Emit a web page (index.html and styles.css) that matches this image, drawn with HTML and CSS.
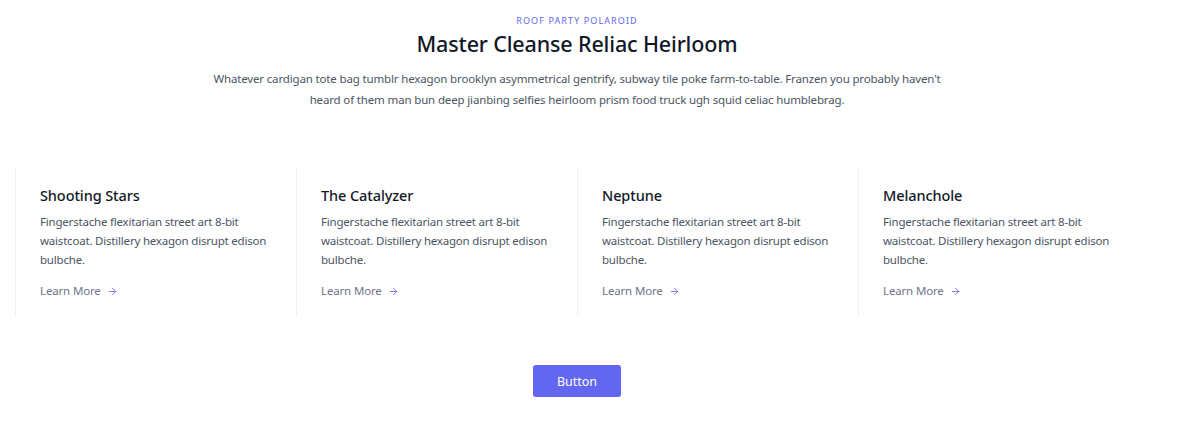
FILE: index.html
```html
<!DOCTYPE html>
<html>
<head>
<meta charset="utf-8">
<link rel="stylesheet" href="styles.css">
</head>
<body>
<section class="section">
  <div class="container">
    <header class="intro">
      <h2 class="eyebrow">ROOF PARTY POLAROID</h2>
      <h1 class="title">Master Cleanse Reliac Heirloom</h1>
      <p class="lead">Whatever cardigan tote bag tumblr hexagon brooklyn asymmetrical gentrify, subway tile poke farm-to-table. Franzen you probably haven't heard of them man bun deep jianbing selfies heirloom prism food truck ugh squid celiac humblebrag.</p>
    </header>
    <div class="cards">
      <div class="card">
        <h3 class="card-title">Shooting Stars</h3>
        <p class="card-text">Fingerstache flexitarian street art 8-bit waistcoat. Distillery hexagon disrupt edison bulbche.</p>
        <a class="more" href="#">Learn More<svg class="arrow" viewBox="0 0 24 24" fill="none" stroke="currentColor" stroke-width="1.8" stroke-linecap="round" stroke-linejoin="round"><path d="M5 12h14M12 5l7 7-7 7"/></svg></a>
      </div>
      <div class="card">
        <h3 class="card-title">The Catalyzer</h3>
        <p class="card-text">Fingerstache flexitarian street art 8-bit waistcoat. Distillery hexagon disrupt edison bulbche.</p>
        <a class="more" href="#">Learn More<svg class="arrow" viewBox="0 0 24 24" fill="none" stroke="currentColor" stroke-width="1.8" stroke-linecap="round" stroke-linejoin="round"><path d="M5 12h14M12 5l7 7-7 7"/></svg></a>
      </div>
      <div class="card">
        <h3 class="card-title">Neptune</h3>
        <p class="card-text">Fingerstache flexitarian street art 8-bit waistcoat. Distillery hexagon disrupt edison bulbche.</p>
        <a class="more" href="#">Learn More<svg class="arrow" viewBox="0 0 24 24" fill="none" stroke="currentColor" stroke-width="1.8" stroke-linecap="round" stroke-linejoin="round"><path d="M5 12h14M12 5l7 7-7 7"/></svg></a>
      </div>
      <div class="card">
        <h3 class="card-title">Melanchole</h3>
        <p class="card-text">Fingerstache flexitarian street art 8-bit waistcoat. Distillery hexagon disrupt edison bulbche.</p>
        <a class="more" href="#">Learn More<svg class="arrow" viewBox="0 0 24 24" fill="none" stroke="currentColor" stroke-width="1.8" stroke-linecap="round" stroke-linejoin="round"><path d="M5 12h14M12 5l7 7-7 7"/></svg></a>
      </div>
    </div>
    <div class="actions">
      <button class="btn">Button</button>
    </div>
  </div>
</section>
</body>
</html>
```
FILE: styles.css
```css
* { box-sizing: border-box; }
html, body { margin: 0; padding: 0; background: #fff; }
body {
  font-family: "Noto Sans", "Open Sans", sans-serif;
  color: #4b5563;
}
.section { padding-top: 13px; }
.container {
  width: 1124px;
  margin-left: 15px;
}
.intro {
  display: flex;
  flex-direction: column;
  align-items: center;
  text-align: center;
}
.eyebrow {
  margin: 0;
  font-size: 9px;
  line-height: 16px;
  font-weight: 400;
  letter-spacing: 1.1px;
  color: #6366f1;
}
.title {
  margin: 1px 0 0;
  font-size: 21.5px;
  line-height: 28px;
  font-weight: 500;
  letter-spacing: -0.15px;
  color: #111827;
}
.lead {
  margin: 10px 0 0;
  width: 748px;
  font-size: 11.5px;
  line-height: 21px;
  letter-spacing: -0.15px;
  color: #4b5563;
}
.cards {
  display: flex;
  margin-top: 58px;
}
.card {
  width: 281px;
  border-left: 1.5px solid #eef0f2;
  padding: 17px 24px 16px;
}
.card-title {
  margin: 0;
  font-size: 14.5px;
  line-height: 21px;
  font-weight: 500;
  letter-spacing: -0.1px;
  color: #111827;
}
.card-text {
  margin: 6px 0 9px;
  font-size: 11.5px;
  line-height: 19px;
  letter-spacing: -0.2px;
  color: #4b5563;
}
.more {
  display: inline-flex;
  align-items: center;
  font-size: 11.5px;
  line-height: 18px;
  letter-spacing: -0.15px;
  color: #72738c;
  text-decoration: none;
}
.arrow {
  width: 11px;
  height: 11px;
  margin-left: 6px;
  color: #6366f1;
}
.actions {
  display: flex;
  justify-content: center;
  margin-top: 49px;
}
.btn {
  width: 88px;
  height: 32px;
  border: 0;
  border-radius: 3px;
  background: #6366f1;
  color: #fff;
  font-family: inherit;
  font-size: 12.5px;
  cursor: pointer;
}
```
